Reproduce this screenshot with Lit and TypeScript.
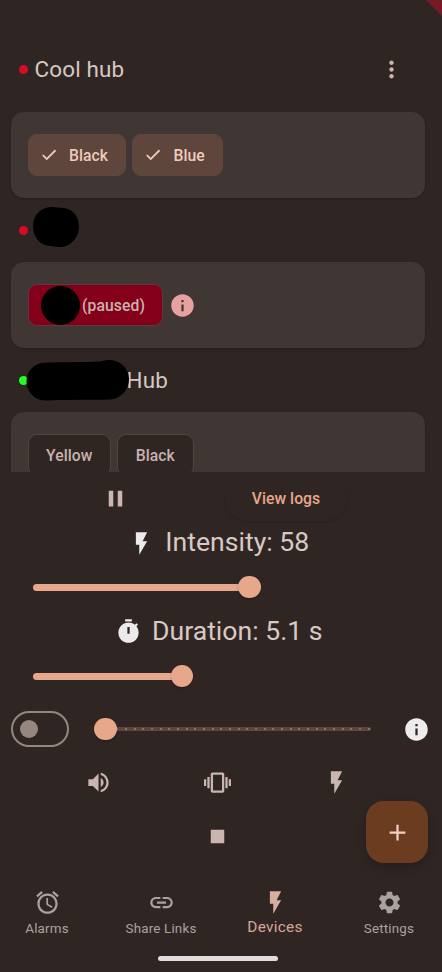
import { LitElement, html, css, svg } from "lit";
import { customElement, property } from "lit/decorators.js";

const ICONS: Record<string, string> = {
  more: "M12 8c1.1 0 2-.9 2-2s-.9-2-2-2-2 .9-2 2 .9 2 2 2zm0 2c-1.1 0-2 .9-2 2s.9 2 2 2 2-.9 2-2-.9-2-2-2zm0 6c-1.1 0-2 .9-2 2s.9 2 2 2 2-.9 2-2-.9-2-2-2z",
  check: "M9 15.600L4.600 11.200 2.900 12.900 9 19 21.500 6.500 19.800 4.800z",
  info: "M12 2C6.48 2 2 6.48 2 12s4.48 10 10 10 10-4.48 10-10S17.52 2 12 2zm1 15h-2v-6h2v6zm0-8h-2V7h2v2z",
  pause: "M6 19h4V5H6v14zm8-14v14h4V5h-4z",
  bolt: "M7 2v11h3v9l7-12h-4l4-8z",
  timer: "M9 1h6v2H9zM19.03 7.39l1.42-1.42c-.43-.51-.9-.99-1.41-1.41l-1.42 1.42C16.07 4.74 14.12 4 12 4c-4.97 0-9 4.03-9 9s4.02 9 9 9 9-4.03 9-9c0-2.12-.74-4.07-1.97-5.61zM13 14h-2V8h2v6z",
  volume: "M3 9v6h4l5 5V4L7 9H3zm13.5 3c0-1.77-1.02-3.29-2.5-4.03v8.05c1.48-.73 2.5-2.25 2.5-4.02zM14 3.23v2.06c2.89.86 5 3.54 5 6.71s-2.11 5.85-5 6.71v2.06c4.01-.91 7-4.49 7-8.77s-2.99-7.86-7-8.77z",
  vibration: "M0 15h2V9H0v6zm3 2h2V7H3v10zm19-8v6h2V9h-2zm-3 8h2V7h-2v10zM16.5 3h-9C6.67 3 6 3.67 6 4.5v15c0 .83.67 1.5 1.5 1.5h9c.83 0 1.5-.67 1.5-1.5v-15c0-.83-.67-1.5-1.5-1.5zM16 19H8V5h8v14z",
  stop: "M6 6h12v12H6z",
  add: "M19 13h-6v6h-2v-6H5v-2h6V5h2v6h6v2z",
  alarm: "M22 5.72l-4.6-3.86-1.29 1.53 4.6 3.86L22 5.72zM7.88 3.39L6.6 1.86 2 5.71l1.29 1.53 4.59-3.85zM12.5 8H11v6l4.75 2.85.75-1.23-4-2.37V8zM12 4c-4.97 0-9 4.03-9 9s4.02 9 9 9c4.97 0 9-4.03 9-9s-4.03-9-9-9zm0 16c-3.87 0-7-3.13-7-7s3.13-7 7-7 7 3.13 7 7-3.13 7-7 7z",
  link: "M3.9 12c0-1.71 1.39-3.1 3.1-3.1h4V7H7c-2.76 0-5 2.24-5 5s2.24 5 5 5h4v-1.9H7c-1.71 0-3.1-1.39-3.1-3.1zM8 13h8v-2H8v2zm9-6h-4v1.9h4c1.71 0 3.1 1.39 3.1 3.1s-1.39 3.1-3.1 3.1h-4V17h4c2.76 0 5-2.24 5-5s-2.24-5-5-5z",
  settings: "M19.14 12.94c.04-.3.06-.61.06-.94 0-.32-.02-.64-.07-.94l2.03-1.58c.18-.14.23-.41.12-.61l-1.92-3.32c-.12-.22-.37-.29-.59-.22l-2.39.96c-.5-.38-1.03-.7-1.62-.94l-.36-2.54c-.04-.24-.24-.41-.48-.41h-3.84c-.24 0-.43.17-.47.41l-.36 2.54c-.59.24-1.13.57-1.62.94l-2.39-.96c-.22-.08-.47 0-.59.22L2.74 8.87c-.12.21-.08.47.12.61l2.03 1.58c-.05.3-.09.63-.09.94s.02.64.07.94l-2.03 1.58c-.18.14-.23.41-.12.61l1.92 3.32c.12.22.37.29.59.22l2.39-.96c.5.38 1.03.7 1.62.94l.36 2.54c.05.24.24.41.48.41h3.84c.24 0 .44-.17.47-.41l.36-2.54c.59-.24 1.13-.56 1.62-.94l2.39.96c.22.08.47 0 .59-.22l1.92-3.32c.12-.22.07-.47-.12-.61l-2.01-1.58zM12 15.6c-1.98 0-3.6-1.62-3.6-3.6s1.62-3.6 3.6-3.6 3.6 1.62 3.6 3.6-1.62 3.6-3.6 3.6z",
};

@customElement("md-icon")
class MdIcon extends LitElement {
  @property() name = "";
  static styles = css`
    :host { display: block; width: 27px; height: 27px; flex: none; }
    svg { display: block; width: 100%; height: 100%; fill: currentColor; }
  `;
  render() {
    return html`<svg viewBox="0 0 24 24">${svg`<path d=${ICONS[this.name]}></path>`}</svg>`;
  }
}

@customElement("value-slider")
class ValueSlider extends LitElement {
  @property({ type: Number }) fraction = 0;
  @property({ type: Number }) divisions = 0;
  static styles = css`
    :host { display: block; }
    .slider { position: relative; height: 22px; display: flex; align-items: center; }
    .active { height: 7px; border-radius: 4px; background: #e7a78b; }
    .rail {
      flex: 1; height: 4px; margin: 0 -2px; border-radius: 2px; background: #5d463d;
      display: flex; justify-content: space-between; align-items: center; padding: 0 1px 0 4px;
    }
    .tick { width: 2px; height: 2px; border-radius: 1px; background: #a97b69; }
    .thumb {
      position: absolute; top: 0; width: 22.4px; height: 22.4px; margin-left: -11.2px;
      border-radius: 50%; background: #e7a78b; box-shadow: 0 1px 2px rgba(0, 0, 0, 0.3);
    }
  `;
  render() {
    const pos = `${this.fraction * 100}%`;
    return html`<div class="slider">
      ${this.divisions
        ? html`<div class="rail">
            ${Array.from({ length: this.divisions + 1 }, () => html`<span class="tick"></span>`)}
          </div>`
        : html`<div class="active" style="width:${pos}"></div>`}
      <div class="thumb" style="left:${pos}"></div>
    </div>`;
  }
}

@customElement("app-root")
class AppRoot extends LitElement {
  static styles = css`
    :host {
      display: flex; flex-direction: column; position: relative; box-sizing: border-box;
      width: 442px; height: 972px; overflow: hidden; background: #2f2624; color: #d8c8c3;
      font-family: Roboto, sans-serif;
    }
    * { box-sizing: border-box; }
    .banner {
      position: absolute; top: 0; right: 0; width: 16px; height: 16px;
      background: #761a25; clip-path: polygon(0 0, 100% 0, 100% 100%);
    }
    .hubs { height: 472px; padding: 37px 17px 0 11px; overflow: hidden; flex: none; }
    .head {
      position: relative; height: 64px; display: flex; align-items: center;
      padding: 0 20px 0 7.5px; font-size: 22.4px; letter-spacing: 0.18px; line-height: 28px;
    }
    .head.first { margin-bottom: 11px; }
    .dot { width: 9px; height: 9px; border-radius: 50%; background: #d40d22; margin: 1px 7px 0 0; }
    .dot.on { background: #22ff22; }
    .grow { flex: 1; }
    .more { color: #cab5b0; }
    .tail { margin-left: 92px; }
    .mark { position: absolute; fill: #000; }
    .mark-a { left: 21px; top: 8px; width: 48px; height: 42px; }
    .mark-b { left: 15px; top: 11px; width: 104px; height: 44px; }
    .card {
      height: 86px; border-radius: 13px; background: #403633; padding: 22px 16.5px;
      display: flex; align-items: center; gap: 6px; box-shadow: 0 1px 2px rgba(0, 0, 0, 0.25);
    }
    .chip {
      height: 42px; border-radius: 9px; display: flex; align-items: center; justify-content: center;
      border: 1.5px solid #544440; background: #2f2624; color: #c9b3ad;
      font-size: 15.7px; font-weight: 500; letter-spacing: 0.05px;
    }
    .chip.sel { background: #5e463c; border-color: #5e463c; color: #efcabd; justify-content: flex-start; padding-left: 11px; gap: 11.5px; }
    .chip.sel md-icon { width: 18px; height: 18px; }
    .w98 { width: 98.5px; }
    .w91 { width: 91px; }
    .w83 { width: 83.5px; }
    .w76 { width: 76.5px; }
    .chip.paused { position: relative; width: 135px; background: #84001a; border-color: #5b3a38; justify-content: flex-end; padding-right: 16.5px; letter-spacing: 0.1px; }
    .cover { position: absolute; left: 12px; top: 0.5px; width: 39px; height: 39px; border-radius: 50%; background: #000; }
    .warn { color: #e7a1a1; }
    .row { display: flex; align-items: center; flex: none; }
    .top { height: 53px; }
    .half { display: flex; justify-content: center; }
    .pause-cell { width: 231px; color: #cab5b0; }
    .logs {
      width: 122px; height: 45px; margin-left: -6px; border-radius: 23px;
      display: flex; align-items: center; justify-content: center; color: #e7a78b;
      font-size: 15.7px; font-weight: 500; letter-spacing: 0.05px;
      box-shadow: 0 1px 2px rgba(0, 0, 0, 0.16);
    }
    .reading { justify-content: center; height: 36px; gap: 11.5px; font-size: 26.6px; color: #dac9c3; padding-right: 5px; }
    .reading md-icon { color: #ebebeb; }
    .reading span { margin: -3px 0 0 -1px; }
    .wide { margin: 15px 34px 0 33px; }
    .wide + .reading { margin-top: 16px; }
    .wide + .reading md-icon { margin-top: -1px; }
    .mode { height: 36px; margin-top: 24px; padding: 0 12px 0 11px; }
    .switch { width: 58px; height: 36px; border: 2px solid #978680; border-radius: 18px; display: flex; align-items: center; padding-left: 7px; }
    .knob { width: 18px; height: 18px; border-radius: 50%; background: #978680; }
    .mode value-slider { width: 263.5px; margin-left: 36.5px; }
    .mode md-icon { color: #ededed; margin-left: 33.5px; }
    .actions { height: 54px; margin: 8px 7px 0 0; color: #cab5b0; justify-content: center; gap: 92px; }
    .stop { height: 54px; justify-content: center; color: #cab5b0; margin-right: 7px; }
    .fab {
      position: absolute; left: 366px; top: 801px; width: 62px; height: 62px; border-radius: 18px;
      background: #6c3c21; color: #f3cfc1; display: flex; align-items: center; justify-content: center;
      box-shadow: 0 4px 8px rgba(0, 0, 0, 0.22);
    }
    .nav { margin: 11px -4px 0 -10px; height: 64px; align-items: flex-start; }
    .tab {
      flex: 1 1 0; display: flex; flex-direction: column; align-items: center; padding-top: 15px;
      font-size: 13.4px; line-height: 16px; letter-spacing: 0.18px; color: #a8a3a1; white-space: nowrap;
    }
    .tab span { margin-top: 5px; }
    .tab.on { font-size: 15.4px; letter-spacing: 0.28px; color: #d4a899; }
    .tab.on md-icon { color: #d7ae9f; }
    .tab.on span { margin-top: 3px; }
    .pill { width: 120px; height: 5px; border-radius: 3px; background: #dfdcdb; margin: 18px 0 0 158px; flex: none; }
  `;
  render() {
    return html`
      <section class="hubs">
        <div class="head first"><i class="dot"></i>Cool hub<span class="grow"></span><md-icon class="more" name="more"></md-icon></div>
        <div class="card">
          <div class="chip sel w98"><md-icon name="check"></md-icon>Black</div>
          <div class="chip sel w91"><md-icon name="check"></md-icon>Blue</div>
        </div>
        <div class="head">
          <i class="dot"></i>
          <svg class="mark mark-a" viewBox="0 0 48 42"><path d="M1 20C1 8 10 1 20 1c5 0 7 1 12 1 9 1 15 9 15 19s-8 20-19 20c-5 0-7-1-11-1C8 39 1 31 1 20z"></path></svg>
        </div>
        <div class="card">
          <div class="chip paused"><i class="cover"></i>(paused)</div>
          <md-icon class="warn" name="info"></md-icon>
        </div>
        <div class="head">
          <i class="dot on"></i><span class="tail">Hub</span>
          <svg class="mark mark-b" viewBox="0 0 104 44"><path d="M.5 22.500C.5 12 8 4.500 18 3.800C36 2.800 60 3.300 74 2.500c4-1 6-1.500 9-1.500 12 0 20 9 20 19 0 11-8 19-18 20.500-22 .5-46 0-65 1C9 42 .5 33 .5 22.500z"></path></svg>
        </div>
        <div class="card">
          <div class="chip w83">Yellow</div>
          <div class="chip w76">Black</div>
        </div>
      </section>
      <div class="row top">
        <div class="half pause-cell"><md-icon name="pause"></md-icon></div>
        <div class="logs">View logs</div>
      </div>
      <div class="row reading"><md-icon name="bolt"></md-icon><span>Intensity: 58</span></div>
      <value-slider class="wide" .fraction=${0.577}></value-slider>
      <div class="row reading"><md-icon name="timer"></md-icon><span>Duration: 5.1 s</span></div>
      <value-slider class="wide" .fraction=${0.397}></value-slider>
      <div class="row mode">
        <div class="switch"><i class="knob"></i></div>
        <value-slider .fraction=${0} .divisions=${30}></value-slider>
        <md-icon name="info"></md-icon>
      </div>
      <div class="row actions">
        <md-icon name="volume"></md-icon><md-icon name="vibration"></md-icon><md-icon name="bolt"></md-icon>
      </div>
      <div class="row stop"><md-icon name="stop"></md-icon></div>
      <nav class="row nav">
        <div class="tab"><md-icon name="alarm"></md-icon><span>Alarms</span></div>
        <div class="tab"><md-icon name="link"></md-icon><span>Share Links</span></div>
        <div class="tab on"><md-icon name="bolt"></md-icon><span>Devices</span></div>
        <div class="tab"><md-icon name="settings"></md-icon><span>Settings</span></div>
      </nav>
      <div class="pill"></div>
      <div class="fab"><md-icon name="add"></md-icon></div>
      <div class="banner"></div>
    `;
  }
}
